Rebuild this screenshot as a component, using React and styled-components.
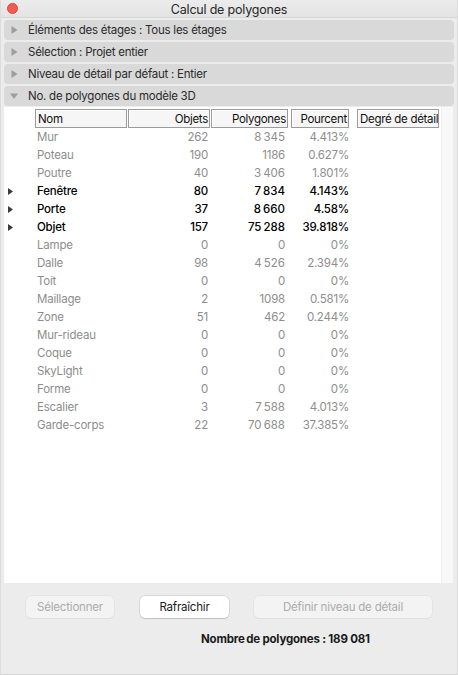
import React from 'react';
import styled, { createGlobalStyle } from 'styled-components';

const GlobalStyle = createGlobalStyle`
  html, body {
    margin: 0;
    padding: 0;
    background: #ececec;
  }
  * {
    box-sizing: border-box;
  }
  body {
    font-family: Inter, "Noto Sans", "Liberation Sans", sans-serif;
    letter-spacing: -0.2px;
    -webkit-font-smoothing: antialiased;
  }
`;

const Window = styled.div`
  width: 458px;
  height: 675px;
  background: #ececec;
  border-left: 1px solid #dcdcdc;
  border-right: 1px solid #dcdcdc;
  border-bottom: 1px solid #d4d4d4;
  display: flex;
  flex-direction: column;
  overflow: hidden;
`;

const TitleBar = styled.div`
  height: 18px;
  position: relative;
  display: flex;
  align-items: center;
  justify-content: center;
  padding-top: 1px;
  background: linear-gradient(#ececec, #e3e3e3);
  border-bottom: 1px solid #d6d6d6;
  font-size: 12.5px;
  color: #262626;
`;

const CloseDot = styled.span`
  position: absolute;
  left: 6px;
  top: 3px;
  width: 11px;
  height: 11px;
  border-radius: 50%;
  background: #f25a52;
  border: 0.5px solid #d9473f;
`;

const Sections = styled.div`
  display: flex;
  flex-direction: column;
  gap: 2px;
  padding: 2px 3px 0 3px;
`;

const SectionRow = styled.div`
  height: 20px;
  border-radius: 4px;
  background: #d9d9d9;
  display: flex;
  align-items: center;
  padding-left: 6px;
  font-size: 11.5px;
  letter-spacing: -0.25px;
  color: #2a2a2a;
`;

const Caret = styled.span`
  width: 8px;
  height: 8px;
  margin-right: 10px;
  display: inline-flex;
  align-items: center;
  justify-content: center;
`;

const TableFrame = styled.div`
  margin: 1px 4px 0 3px;
  height: 476px;
  display: flex;
  background: #fff;
`;

const TableBody = styled.div`
  flex: 1;
  background: #fff;
  padding-top: 2px;
`;

const ScrollTrack = styled.div`
  width: 12px;
  background: #f8f8f8;
  border-left: 1px solid #efefef;
`;

const Row = styled.div`
  display: grid;
  grid-template-columns: 31px 93px 83px 80px 66px 82px;
  height: ${(p) => (p.$header ? '19px' : '18px')};
  align-items: center;
  font-size: 11.5px;
  color: ${(p) => (p.$strong ? '#000' : '#8d8d8d')};
  font-weight: ${(p) => (p.$strong ? 500 : 400)};
`;

const HeadCell = styled.div`
  width: ${(p) => p.$w}px;
  height: 19px;
  border: 1px solid #9b9b9b;
  box-shadow: inset 1px 1px 0 #fff;
  background: #f6f6f6;
  color: #111;
  font-size: 11.5px;
  letter-spacing: -0.3px;
  display: flex;
  align-items: center;
  justify-content: ${(p) => (p.$right ? 'flex-end' : 'flex-start')};
  padding: 0 1px 0 2px;
  white-space: nowrap;
  overflow: hidden;
`;

const Cell = styled.div`
  text-align: ${(p) => (p.$right ? 'right' : 'left')};
  padding-right: ${(p) => p.$pr || 0}px;
  padding-left: ${(p) => p.$pl || 0}px;
  white-space: nowrap;
`;

const RowArrow = styled.span`
  display: flex;
  padding-left: 4px;
`;

const Footer = styled.div`
  display: flex;
  flex-direction: column;
  padding-top: 13px;
`;

const Buttons = styled.div`
  display: flex;
  padding-left: 25px;
`;

const Button = styled.button`
  height: 22px;
  width: ${(p) => p.$w}px;
  margin-right: ${(p) => p.$mr || 0}px;
  border-radius: 5px;
  font-family: inherit;
  font-size: 11.5px;
  letter-spacing: -0.2px;
  padding: 0;
  border: none;
  background: ${(p) => (p.disabled ? '#f3f3f3' : '#fff')};
  color: ${(p) => (p.disabled ? '#acacac' : '#1a1a1a')};
  box-shadow: ${(p) => (p.disabled
    ? '0 0 0 0.5px #dedede, 0 1px 1px rgba(0,0,0,0.06)'
    : '0 0 0 0.5px #c4c4c4, 0 1px 1px rgba(0,0,0,0.18)')};
`;

const Total = styled.div`
  padding-left: 200px;
  margin-top: 14px;
  font-size: 11.5px;
  font-weight: 700;
  color: #1a1a1a;
`;

// narrow no-break space as thousands separator
const n = (s) => s.replace(' ', '\u202F');

const rows = [
  ['Mur', '262', '8 345', '4.413%'],
  ['Poteau', '190', '1186', '0.627%'],
  ['Poutre', '40', '3 406', '1.801%'],
  ['Fenêtre', '80', '7 834', '4.143%', true],
  ['Porte', '37', '8 660', '4.58%', true],
  ['Objet', '157', '75 288', '39.818%', true],
  ['Lampe', '0', '0', '0%'],
  ['Dalle', '98', '4 526', '2.394%'],
  ['Toit', '0', '0', '0%'],
  ['Maillage', '2', '1098', '0.581%'],
  ['Zone', '51', '462', '0.244%'],
  ['Mur-rideau', '0', '0', '0%'],
  ['Coque', '0', '0', '0%'],
  ['SkyLight', '0', '0', '0%'],
  ['Forme', '0', '0', '0%'],
  ['Escalier', '3', '7 588', '4.013%'],
  ['Garde-corps', '22', '70 688', '37.385%'],
];

function Triangle({ open }) {
  return (
    <svg width="8" height="8" viewBox="0 0 8 8">
      {open
        ? <path d="M0 1.5 L8 1.5 L4 7 Z" fill="#9d9d9d" />
        : <path d="M1.5 0 L7.5 4 L1.5 8 Z" fill="#9d9d9d" />}
    </svg>
  );
}

function SmallArrow() {
  return (
    <svg width="5" height="7" viewBox="0 0 5 7">
      <path d="M0 0 L5 3.5 L0 7 Z" fill="#3a3a3a" />
    </svg>
  );
}

const sections = [
  ['Éléments des étages : Tous les étages', false],
  ['Sélection : Projet entier', false],
  ['Niveau de détail par défaut : Entier', false],
  ['No. de polygones du modèle 3D', true],
];

export default function App() {
  return (
    <>
      <GlobalStyle />
      <Window>
        <TitleBar>
          <CloseDot />
          Calcul de polygones
        </TitleBar>
        <Sections>
          {sections.map(([label, open]) => (
            <SectionRow key={label}>
              <Caret><Triangle open={open} /></Caret>
              {label}
            </SectionRow>
          ))}
        </Sections>
        <TableFrame>
          <TableBody>
            <Row $header>
              <span />
              <HeadCell $w={92}>Nom</HeadCell>
              <HeadCell $w={82} $right>Objets</HeadCell>
              <HeadCell $w={77} $right>Polygones</HeadCell>
              <HeadCell $w={58} $right>Pourcent</HeadCell>
              <HeadCell $w={82}>Degré de détail</HeadCell>
            </Row>
            {rows.map(([name, count, polys, pct, strong]) => (
              <Row key={name} $strong={strong}>
                <RowArrow>{strong && <SmallArrow />}</RowArrow>
                <Cell $pl={2}>{name}</Cell>
                <Cell $right $pr={3}>{count}</Cell>
                <Cell $right $pr={6}>{n(polys)}</Cell>
                <Cell $right $pr={8}>{pct}</Cell>
                <Cell />
              </Row>
            ))}
          </TableBody>
          <ScrollTrack />
        </TableFrame>
        <Footer>
          <Buttons>
            <Button disabled $w={88} $mr={26}>Sélectionner</Button>
            <Button $w={89} $mr={25}>Rafraîchir</Button>
            <Button disabled $w={178}>Définir niveau de détail</Button>
          </Buttons>
          <Total>{n('Nombre de polygones : 189 081')}</Total>
        </Footer>
      </Window>
    </>
  );
}
